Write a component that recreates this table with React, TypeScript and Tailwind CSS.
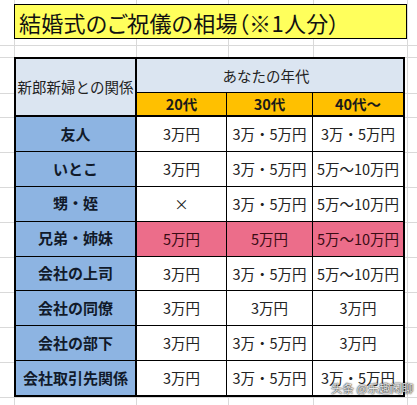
import React from "react";

type Row = { label: string; v: [string, string, string]; pink?: boolean };

const rows: Row[] = [
  { label: "友人", v: ["3万円", "3万・5万円", "3万・5万円"] },
  { label: "いとこ", v: ["3万円", "3万・5万円", "5万～10万円"] },
  { label: "甥・姪", v: ["×", "3万・5万円", "5万～10万円"] },
  { label: "兄弟・姉妹", v: ["5万円", "5万円", "5万～10万円"], pink: true },
  { label: "会社の上司", v: ["3万円", "3万・5万円", "5万～10万円"] },
  { label: "会社の同僚", v: ["3万円", "3万円", "3万円"] },
  { label: "会社の部下", v: ["3万円", "3万・5万円", "3万円"] },
  { label: "会社取引先関係", v: ["3万円", "3万・5万円", "3万・5万円"] },
];

export default function App() {
  return (
    <div className="relative w-[417px] h-[405px] overflow-hidden bg-white font-['Noto_Sans_CJK_JP','Noto_Sans_CJK_SC',sans-serif] text-[#1a1a1a] bg-[linear-gradient(to_right,transparent_14px,#d9d9d9_14px,#d9d9d9_15px,transparent_15px,transparent_136px,#d9d9d9_136px,#d9d9d9_137px,transparent_137px,transparent_228px,#d9d9d9_228px,#d9d9d9_229px,transparent_229px,transparent_313px,#d9d9d9_313px,#d9d9d9_314px,transparent_314px,transparent_407px,#d9d9d9_407px,#d9d9d9_408px,transparent_408px),linear-gradient(to_bottom,transparent_45px,#d9d9d9_45px,#d9d9d9_46px,transparent_46px,transparent_57px,#d9d9d9_57px,#d9d9d9_58px,transparent_58px,transparent_93px,#d9d9d9_93px,#d9d9d9_94px,transparent_94px,transparent_117px,#d9d9d9_117px,#d9d9d9_118px,transparent_118px,transparent_152px,#d9d9d9_152px,#d9d9d9_153px,transparent_153px,transparent_187px,#d9d9d9_187px,#d9d9d9_188px,transparent_188px,transparent_222px,#d9d9d9_222px,#d9d9d9_223px,transparent_223px,transparent_257px,#d9d9d9_257px,#d9d9d9_258px,transparent_258px,transparent_292px,#d9d9d9_292px,#d9d9d9_293px,transparent_293px,transparent_327px,#d9d9d9_327px,#d9d9d9_328px,transparent_328px,transparent_362px,#d9d9d9_362px,#d9d9d9_363px,transparent_363px,transparent_397px,#d9d9d9_397px,#d9d9d9_398px,transparent_398px)]">
      <div className="pt-[4px] pl-[14px]">
        <div className="w-[393px] h-[35px] border border-black bg-[#ffff5c] flex items-center pl-[4px] text-[22px] leading-none whitespace-nowrap text-[#111] [font-feature-settings:'palt'] tracking-[0.3px]">
          結婚式のご祝儀の相場（※1人分）
        </div>
        <div className="mt-[18px] w-[391px] h-[340px] border-2 border-black flex flex-col">
          {/* header */}
          <div className="h-[58px] flex border-b-2 border-black bg-[#dbe5f1]">
            <div className="w-[121px] border-r-2 border-black flex items-center justify-center text-[14.5px] whitespace-nowrap text-[#222]">
              新郎新婦との関係
            </div>
            <div className="flex-1 flex flex-col">
              <div className="h-[35px] border-b border-black flex items-center justify-center text-[14.5px] text-[#222] pr-[8px]">
                あなたの年代
              </div>
              <div className="flex-1 flex bg-[#ffc000] text-[14.5px] font-bold text-[#1a1a1a]">
                <div className="w-[90px] border-r border-black flex items-center justify-center">20代</div>
                <div className="w-[86px] border-r border-black flex items-center justify-center">30代</div>
                <div className="flex-1 flex items-center justify-center">40代～</div>
              </div>
            </div>
          </div>
          {/* body */}
          <div className="flex-1 flex flex-col">
            {rows.map((r, i) => (
              <div
                key={r.label}
                className={`flex-1 flex ${i < rows.length - 1 ? "border-b border-black" : ""}`}
              >
                <div className="w-[121px] border-r-2 border-black bg-[#8db4e2] flex items-center justify-center text-[15px] font-bold whitespace-nowrap text-[#111a2a]">
                  {r.label}
                </div>
                <div
                  className={`w-[90px] border-r border-black flex items-center justify-center text-[14.5px] whitespace-nowrap ${r.pink ? "bg-[#ec6d8a] text-[#3a0c14]" : "bg-white text-[#222]"}`}
                >
                  {r.v[0]}
                </div>
                <div
                  className={`w-[86px] border-r border-black flex items-center justify-center text-[14.5px] whitespace-nowrap ${r.pink ? "bg-[#ec6d8a] text-[#3a0c14]" : "bg-white text-[#222]"}`}
                >
                  {r.v[1]}
                </div>
                <div
                  className={`flex-1 flex items-center justify-center text-[14.5px] whitespace-nowrap ${r.pink ? "bg-[#ec6d8a] text-[#3a0c14]" : "bg-white text-[#222]"}`}
                >
                  {r.v[2]}
                </div>
              </div>
            ))}
          </div>
        </div>
      </div>
      <div className="absolute left-[331px] top-[383px] text-[11.5px] leading-none whitespace-nowrap text-white/90 font-['Noto_Sans_CJK_SC',sans-serif] [text-shadow:0_0_2px_rgba(0,0,0,0.9),0_0_1px_rgba(0,0,0,0.9)]">
        头条 @乐趣闲聊
      </div>
    </div>
  );
}
